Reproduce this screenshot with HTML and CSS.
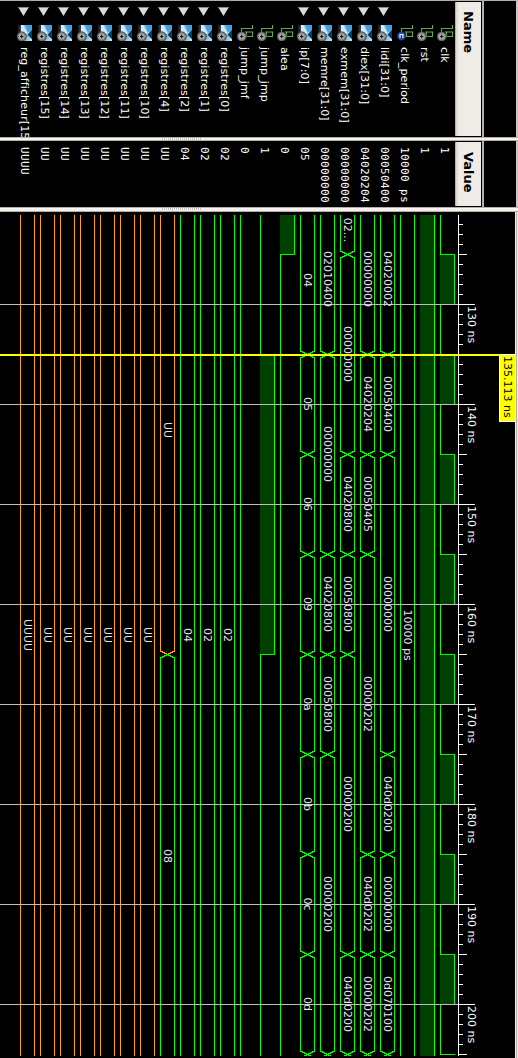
FILE: index.html
```html
<!DOCTYPE html>
<html lang="en">
<head>
<meta charset="utf-8">
<title>Waveform viewer</title>
<link rel="stylesheet" href="styles.css">
</head>
<body>
<svg class="defs" aria-hidden="true">
  <defs>
    <linearGradient id="blue" x1="0" y1="0" x2="1" y2="1">
      <stop offset="0" stop-color="#b9e2f7"/><stop offset=".45" stop-color="#58a9e2"/><stop offset="1" stop-color="#c4e8f8"/>
    </linearGradient>
    <linearGradient id="fade" x1="0" y1="0" x2="1" y2="0">
      <stop offset="0" stop-color="#000"/><stop offset="1" stop-color="#555"/>
    </linearGradient>
    <symbol id="badge" viewBox="0 0 17 16">
      <circle cx="4.7" cy="11.5" r="5" fill="#3c3c3c"/>
      <circle cx="4.7" cy="11.5" r="4.2" fill="#858585"/>
      <circle cx="4.7" cy="11.5" r="2.8" fill="#b4b2b0"/>
      <path d="M3 11.500h3.400M4.700 9.800v3.400" stroke="#111" stroke-width="1.200"/>
    </symbol>
    <symbol id="bus" viewBox="0 0 17 16">
      <rect x="0" y="0" width="5" height="16" fill="url(#fade)"/>
      <path d="M4 0H15V5L11 10L15 14V16H4Z" fill="url(#blue)"/>
      <path d="M4 0H6L11 8L8 10L4 6Z" fill="#cdebfa"/>
      <path d="M8 0H15V4L11.500 7.500Z" fill="#4d9fdc"/>
      <path d="M15 5L11 9.500L15 13Z" fill="#123b5c"/>
      <use href="#badge"/>
    </symbol>
    <symbol id="wave" viewBox="0 0 17 16">
      <path d="M15.500 0V3.500H4.500V8M8 7H15.500V11.500H9.500V7" fill="none" stroke="#68a64c" stroke-width="1.100"/>
    </symbol>
    <symbol id="sig" viewBox="0 0 17 16"><use href="#wave"/><use href="#badge"/></symbol>
    <symbol id="const" viewBox="0 0 17 16">
      <use href="#wave"/>
      <circle cx="4.500" cy="11" r="4.400" fill="#24479a"/>
      <path d="M3 13V9.500H6V13" fill="none" stroke="#fff" stroke-width="1.100"/>
    </symbol>
    <symbol id="tri" viewBox="0 0 11 9">
      <path d="M0 0H11L5.500 9Z" fill="#d9d9d9"/><path d="M0 .5H11" stroke="#888"/>
    </symbol>
  </defs>
</svg>
<main class="viewer">
  <section class="pane names">
    <div class="spacer"></div>
    <h2 class="head">Name</h2>
    <ul class="list" id="names"></ul>
  </section>
  <div class="splitter"><i class="grip"></i></div>
  <section class="pane values">
    <div class="spacer"></div>
    <h2 class="head">Value</h2>
    <ul class="list" id="values"></ul>
  </section>
  <div class="splitter last"><i class="grip"></i></div>
  <section class="pane waves"><svg id="plot" class="plot" width="518" height="846" viewBox="0 212 518 846"></svg></section>
</main>
<script src="app.js"></script>
</body>
</html>
```
FILE: styles.css
```css
* { box-sizing: border-box; }
body {
  margin: 0;
  background: #000;
  color: #fff;
  font: 11px/20px "DejaVu Sans", sans-serif;
  overflow: hidden;
}
.defs { position: absolute; width: 0; height: 0; }
.viewer {
  writing-mode: vertical-rl;
  display: flex;
  width: 518px;
  height: 1058px;
}
.pane { width: 518px; overflow: hidden; flex: none; }
.names { height: 137px; border-top: 1px solid #b5b0a7; }
.values { height: 66px; }
.names, .values { border-right: 2px solid #c9c4bd; }
.spacer { width: 34px; border-left: 2px solid #b5b0a7; }
.head {
  width: 26px;
  margin: 0 1px 0 0;
  border-left: 1px solid #b5aea8;
  box-shadow: inset 2px 0 #e2dbd5;
  background: #efebe7;
  color: #000;
  font-size: 13px;
  font-weight: bold;
  line-height: 26px;
}
.names .head { height: 134px; margin-top: 1px; padding-top: 9px; }
.values .head { height: 64px; margin-top: 1px; padding-top: 10px; }
.list { margin: 0; padding: 0; list-style: none; line-height: 22px; }
.list li { width: 20px; white-space: nowrap; }
.names li {
  display: flex;
  height: 135px;
  padding-top: 6px;
  letter-spacing: .11px;
}
.arrow { width: 11px; height: 9px; margin: 0 0 9px 3px; align-self: flex-end; flex: none; }
.icon { width: 17px; height: 16px; margin: 0 0 6px 2px; align-self: flex-end; flex: none; }
.scalar .icon { margin-top: 18px; }
.values li {
  padding-top: 6px;
  font-family: "DejaVu Sans Mono", monospace;
  letter-spacing: .378px;
}
.splitter {
  width: 518px;
  height: 4px;
  flex: none;
  background: #f7f4f0;
  border-top: 1px solid #b5b0a7;
  border-bottom: 1px solid #b5b0a7;
  padding-right: 316px;
}
.splitter.last { height: 5px; box-shadow: inset 0 -1px #efebe7; }
.grip {
  display: block;
  width: 40px;
  height: 2px;
  background: repeating-linear-gradient(90deg, #c9c4bd 0 1px, #fff 1px 2px);
}
.waves { height: 846px; }
.plot { display: block; writing-mode: horizontal-tb; }
.plot text { fill: #e6e6e6; text-anchor: middle; }
.plot .start { text-anchor: start; fill: #fff; }
.plot .dark { fill: #000; }
```
FILE: app.js
```js
// name, value, kind, colour, transitions, [label, centre] pairs
const G = '#00ff00', O = '#ffa500';
const rows = [
  ['clk', '1', 'sig'],
  ['rst', '1', 'sig'],
  ['clk_period', '10000 ps', 'const', G, [], [['10000 ps', 635]]],
  ['lidi[31:0]', '00050400', 'bus', G, [354, 454, 754, 854, 954, 1054],
    [['04020002', 279], ['00050400', 404], ['00000000', 604], ['040d0200', 804], ['00000000', 904], ['0d070100', 1004]]],
  ['diex[31:0]', '04020204', 'bus', G, [354, 454, 554, 854, 954, 1054],
    [['00000000', 279], ['04020204', 404], ['00050405', 504], ['00000202', 704], ['040d0202', 904], ['00000202', 1004]]],
  ['exmem[31:0]', '00000000', 'bus', G, [254, 454, 554, 654, 954, 1054],
    [['02...', 230], ['00000000', 354], ['04020800', 504], ['00050800', 604], ['00000200', 804], ['040d0200', 1004]]],
  ['memre[31:0]', '00000000', 'bus', G, [354, 554, 654, 754, 1054],
    [['02010400', 279], ['00000000', 454], ['04020800', 604], ['00050800', 704], ['00000200', 904]]],
  ['ip[7:0]', '05', 'bus', G, [354, 454, 554, 654, 754, 854, 954, 1054],
    [['04', 280], ['05', 404], ['06', 504], ['09', 604], ['0a', 704], ['0b', 804], ['0c', 904], ['0d', 1004]]],
  ['alea', '0', 'sig'],
  ['jump_jmp', '1', 'sig'],
  ['jump_jmf', '0', 'sig'],
  ['registres[0]', '02', 'bus', G, [], [['02', 635]]],
  ['registres[1]', '02', 'bus', G, [], [['02', 635]]],
  ['registres[2]', '04', 'bus', G, [], [['04', 635]]],
  ['registres[4]', 'UU', 'bus', O, [654], [['UU', 430], ['08', 856]]],
  ['registres[10]', 'UU', 'bus', O, [], [['UU', 635]]],
  ['registres[11]', 'UU', 'bus', O, [], [['UU', 635]]],
  ['registres[12]', 'UU', 'bus', O, [], [['UU', 635]]],
  ['registres[13]', 'UU', 'bus', O, [], [['UU', 635]]],
  ['registres[14]', 'UU', 'bus', O, [], [['UU', 635]]],
  ['registres[15]', 'UU', 'bus', O, [], [['UU', 635]]],
  ['reg_afficheur[15:0]', 'UUUU', 'bus', O, [], [['UUUU', 635]]]
];
const START = 215, END = 1056;
let names = '', values = '', shapes = '', labels = '';

const rect = (x, y, w, h, c) => `<rect x="${x}" y="${y}" width="${w}" height="${h}" fill="${c}"/>`;
const label = (t, x, y, cls = '') => `<text class="${cls}" transform="translate(${x} ${y}) rotate(90)">${t}</text>`;
const line = (pts, c) => `<polyline points="${pts}" fill="none" stroke="${c}" shape-rendering="crispEdges"/>`;

// logic signal: list of [from, to, level]
function logic(x, parts) {
  parts.forEach(([a, b, high], i) => {
    if (high) shapes += rect(x, a, 14, b - a, '#004000');
    shapes += rect(high ? x + 14 : x, a, 1, b - a, G);
    if (i) shapes += rect(x, a, 15, 1, G);
  });
}

// bus: two rails that cross at each transition
function bus(x, cuts, colour) {
  let from = START, c = colour;
  cuts.forEach(y => {
    const next = G;
    shapes += rect(x, from, 1, y - 3 - from, c) + rect(x + 14, from, 1, y - 3 - from, c);
    shapes += line(`${x + .5},${y - 3} ${x + 7.5},${y + .5} ${x + 14.5},${y - 3}`, c);
    if (y + 4 < END) shapes += line(`${x + .5},${y + 4} ${x + 7.5},${y + .5} ${x + 14.5},${y + 4}`, next);
    else shapes += line(`${x + 4.5},${y + 2} ${x + 7.5},${y + .5} ${x + 10.5},${y + 2}`, next);
    from = y + 4;
    c = next;
  });
  if (from < END) shapes += rect(x, from, 1, END - from, c) + rect(x + 14, from, 1, END - from, c);
}

rows.forEach(([name, value, kind, colour, cuts, texts], i) => {
  const x = 440 - i * 20;
  const arrow = kind === 'bus' ? '<svg class="arrow"><use href="#tri"/></svg>' : '';
  names += `<li class="${arrow ? 'vector' : 'scalar'}">${arrow}<svg class="icon"><use href="#${kind}"/></svg><span>${name}</span></li>`;
  values += `<li>${value}</li>`;
  if (cuts) {
    bus(x, cuts, colour);
    texts.forEach(([t, y]) => { labels += label(t, x + 4, y); });
  }
});

const clk = [[START, 254, 0]];
for (let y = 254; y < END; y += 100) {
  clk.push([y, Math.min(y + 50, END), 1]);
  if (y + 50 < END) clk.push([y + 50, Math.min(y + 100, END), 0]);
}
clk[clk.length - 1][1] = 1055;
logic(440, clk);
logic(420, [[START, END, 1]]);
logic(280, [[START, 254, 1], [254, END, 0]]);
logic(260, [[START, 354, 0], [354, 654, 1], [654, END, 0]]);
logic(240, [[START, END, 0]]);

// time ruler and grid
shapes += rect(458, START, 1, END - START, '#fff');
for (let y = 224; y < END; y += 10) {
  const k = (y - 204) % 100;
  shapes += rect(459, y, k === 0 ? 16 : k === 50 ? 8 : 4, 1, '#fff');
  if (k === 0) {
    shapes += rect(0, y, 458, 1, '#c0c0c0');
    labels += label(`${130 + (y - 304) / 10} ns`, 468, y + 2, 'start');
  }
}

// pane edge and time cursor
const edge = rect(515, 212, 1, 846, '#f7f4f0') + rect(516, 212, 1, 846, '#b5b0a7') + rect(517, 212, 1, 846, '#efebe7');
const cursor = rect(0, 354, 499, 2, '#ffff00') + rect(499, 354, 16, 68, '#fff') + rect(500, 355, 15, 66, '#ffff00')
  + label('135.113 ns', 504, 356, 'start dark');

document.getElementById('names').innerHTML = names;
document.getElementById('values').innerHTML = values;
document.getElementById('plot').innerHTML = shapes + labels + edge + cursor;
```
